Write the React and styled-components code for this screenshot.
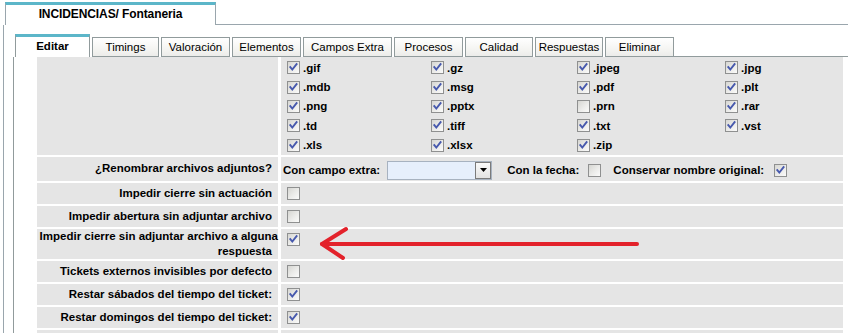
import React from "react";
import styled, { createGlobalStyle } from "styled-components";

const Global = createGlobalStyle`
  html, body { margin: 0; padding: 0; background: #fff; overflow: hidden; }
  body { font-family: "Liberation Sans", Arial, sans-serif; color: #000; }
`;

const Page = styled.div`
  position: relative;
  width: 848px;
  height: 333px;
  overflow: hidden;
`;

const OuterStrip = styled.div`
  display: flex;
  margin-top: 2px;
  padding-left: 5px;
  height: 23px;
`;

const OuterTab = styled.div`
  width: 211px;
  box-sizing: border-box;
  height: 23px;
  border: 1px solid #9aa6ad;
  border-top: 3px solid #5cb6c9;
  border-bottom: none;
  background: #fff;
  display: flex;
  align-items: center;
  justify-content: center;
  padding-bottom: 2px;
  font-weight: bold;
  font-size: 12px;
  letter-spacing: -0.1px;
`;

const StripFill = styled.div`
  flex: 1;
  border-bottom: 1px solid #9aa6ad;
`;

const OuterBody = styled.div`
  margin-left: 3px;
  border-left: 1px solid #9aa6ad;
  padding: 9px 0 0 9px;
`;

const TabStrip = styled.div`
  display: flex;
  align-items: flex-end;
  height: 23px;
  padding-left: 2px;
  gap: 2px;
`;

const Tab = styled.div`
  box-sizing: border-box;
  width: ${(p) => p.$w}px;
  height: ${(p) => (p.$active ? 23 : 20)}px;
  display: flex;
  align-items: center;
  justify-content: center;
  font-size: 11.5px;
  font-weight: ${(p) => (p.$active ? "bold" : "normal")};
  border: 1px solid #919b9c;
  border-top: ${(p) => (p.$active ? "3px solid #5cb6c9" : "1px solid #919b9c")};
  border-bottom: ${(p) => (p.$active ? "none" : "1px solid #919b9c")};
  background: ${(p) =>
    p.$active ? "#fff" : "linear-gradient(#ffffff, #f3f3f0 70%, #ececea)"};
  padding-bottom: ${(p) => (p.$active ? 3 : 1)}px;
  white-space: nowrap;
`;

const TabFill = styled.div`
  flex: 1;
  align-self: stretch;
  border-bottom: 1px solid #919b9c;
  margin-left: -2px;
`;

const Panel = styled.div`
  border-left: 1px solid #919b9c;
  padding: 0 5px 0 23px;
`;

const Grid = styled.div`
  display: grid;
  grid-template-columns: 241px 1fr;
  column-gap: 3px;
  row-gap: 2px;
`;

const Label = styled.div`
  background: #e5e5e5;
  display: flex;
  align-items: center;
  justify-content: flex-end;
  text-align: right;
  padding: 0 0 0 2px;
  min-height: 21px;
  font-weight: bold;
  font-size: 11.5px;
  line-height: 15px;
`;

const LabelText = styled.span`
  &::after {
    content: "";
    display: inline-block;
    width: 6px;
  }
`;

const Value = styled.div`
  background: #e5e5e5;
  display: flex;
  align-items: ${(p) => (p.$center ? "center" : "flex-start")};
  padding: ${(p) => p.$pad || "4px 2px"};
  min-height: 13px;
  font-weight: bold;
  font-size: 11.5px;
`;

const ExtGrid = styled.div`
  display: grid;
  grid-template-columns: 144px 146px 148px 1fr;
  grid-auto-rows: 19.4px;
  padding: 1px 0 0;
  width: 100%;
`;

const ExtItem = styled.div`
  display: flex;
  align-items: center;
  font-weight: bold;
  font-size: 11.5px;
`;

const BoxWrap = styled.span`
  box-sizing: border-box;
  display: inline-flex;
  flex: none;
  width: 13px;
  height: 13px;
  margin-left: ${(p) => p.$ml ?? 4}px;
  margin-right: ${(p) => p.$mr ?? 3}px;
  border: 1px solid #8f9090;
  background: linear-gradient(135deg, #d6d6d2 0%, #ececea 55%, #fbfbfa 100%);
`;

const Check = ({ checked, ml, mr }) => (
  <BoxWrap $ml={ml} $mr={mr}>
    {checked && (
      <svg width="11" height="11" viewBox="0 0 11 11">
        <path d="M2.3 5.2 L4.3 7.6 L8.6 2.2" fill="none" stroke="#4759ad" strokeWidth="1.9" strokeLinecap="square" />
      </svg>
    )}
  </BoxWrap>
);

const Text = styled.span`
  margin-left: ${(p) => p.$ml || 0}px;
  white-space: nowrap;
`;

const Select = styled.div`
  box-sizing: border-box;
  display: flex;
  justify-content: flex-end;
  width: 105px;
  height: 19px;
  margin-left: 7px;
  border: 1px solid #a7b2c0;
  background: #e6effc;
`;

const SelectBtn = styled.div`
  box-sizing: border-box;
  width: 16px;
  height: 17px;
  border: 1px solid #7b7b7b;
  background: linear-gradient(#fafafa, #e2e2e2);
  display: flex;
  align-items: center;
  justify-content: center;
`;

const Arrow = styled.svg`
  position: absolute;
  left: 0;
  top: 0;
  pointer-events: none;
`;

const tabs = [
  ["Editar", 75],
  ["Timings", 67],
  ["Valoración", 69],
  ["Elementos", 69],
  ["Campos Extra", 89],
  ["Procesos", 69],
  ["Calidad", 68],
  ["Respuestas", 68],
  ["Eliminar", 69],
];

const exts = [
  [".gif", 1], [".gz", 1], [".jpeg", 1], [".jpg", 1],
  [".mdb", 1], [".msg", 1], [".pdf", 1], [".plt", 1],
  [".png", 1], [".pptx", 1], [".prn", 0], [".rar", 1],
  [".td", 1], [".tiff", 1], [".txt", 1], [".vst", 1],
  [".xls", 1], [".xlsx", 1], [".zip", 1],
];

const rows = [
  [["Impedir cierre sin actuación"], false],
  [["Impedir abertura sin adjuntar archivo"], false],
  [["Impedir cierre sin adjuntar archivo a alguna", "respuesta"], true],
  [["Tickets externos invisibles por defecto"], false],
  [["Restar sábados del tiempo del ticket:"], true],
  [["Restar domingos del tiempo del ticket:"], true],
  [[], false],
];

export default function App() {
  return (
    <Page>
      <Global />
      <OuterStrip>
        <OuterTab>INCIDENCIAS/ Fontaneria</OuterTab>
        <StripFill />
      </OuterStrip>
      <OuterBody>
        <TabStrip>
          {tabs.map(([t, w], i) => (
            <Tab key={t} $w={w} $active={i === 0}>
              {t}
            </Tab>
          ))}
          <TabFill />
        </TabStrip>
        <Panel>
          <Grid>
            <Label />
            <Value $pad="0 2px 0 2px">
              <ExtGrid>
                {exts.map(([e, c]) => (
                  <ExtItem key={e}>
                    <Check checked={!!c} />
                    {e}
                  </ExtItem>
                ))}
              </ExtGrid>
            </Value>

            <Label>
              <LabelText>¿Renombrar archivos adjuntos?</LabelText>
            </Label>
            <Value $center $pad="4px 2px 1px 2px">
              <Text>Con campo extra:</Text>
              <Select>
                <SelectBtn>
                  <svg width="7" height="4" viewBox="0 0 7 4">
                    <path d="M0 0 H7 L3.5 4 Z" fill="#000" />
                  </svg>
                </SelectBtn>
              </Select>
              <Text $ml={15}>Con la fecha:</Text>
              <Check ml={9} mr={0} />
              <Text $ml={12}>Conservar nombre original:</Text>
              <Check ml={10} checked />
            </Value>

            {rows.map(([lines, c], i) => (
              <React.Fragment key={i}>
                <Label>
                  {lines.length > 0 && (
                    <LabelText>
                      {lines.map((ln, j) => (
                        <React.Fragment key={j}>
                          {j > 0 && <br />}
                          {ln}
                        </React.Fragment>
                      ))}
                    </LabelText>
                  )}
                </Label>
                <Value>{lines.length > 0 && <Check checked={c} />}</Value>
              </React.Fragment>
            ))}
          </Grid>
        </Panel>
      </OuterBody>
      <Arrow width="848" height="333" viewBox="0 0 848 333">
        <g fill="none" stroke="#e3222b" strokeWidth="4" strokeLinecap="round" strokeLinejoin="round">
          <path d="M637 244 H322" />
          <path d="M346 229 L322 244 L343 258" />
        </g>
      </Arrow>
    </Page>
  );
}
